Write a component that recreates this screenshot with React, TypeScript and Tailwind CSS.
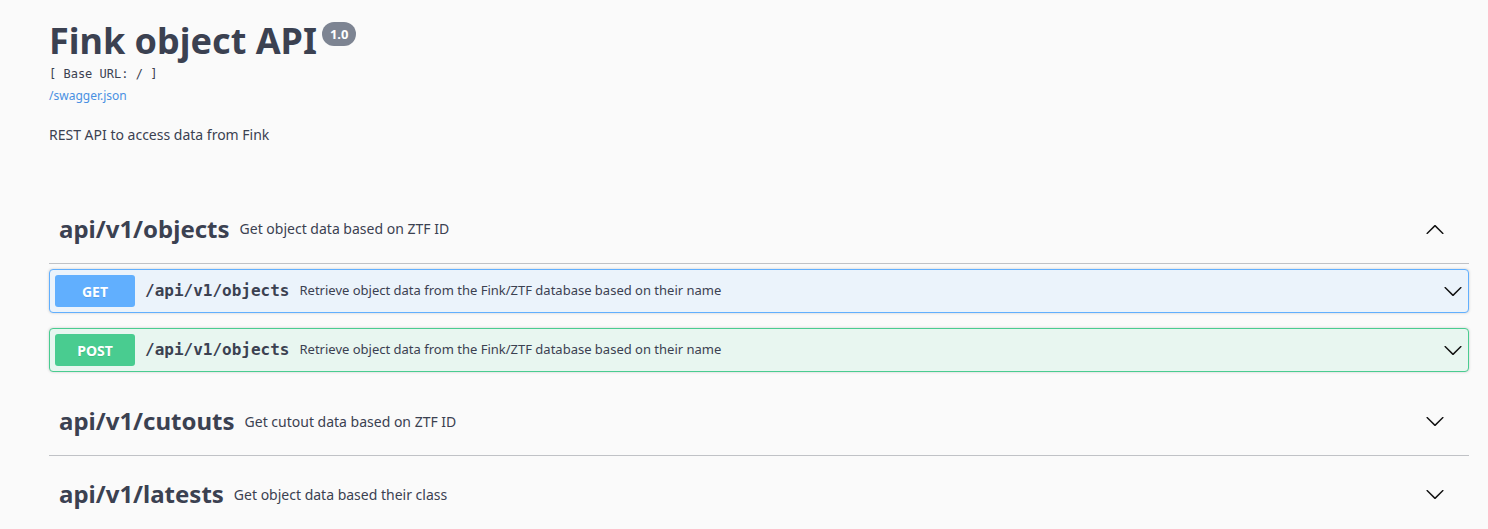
import React from 'react';

const sans = { fontFamily: '"Noto Sans", "Open Sans", sans-serif' };

const ArrowDown: React.FC<{ className?: string }> = ({ className }) => (
    <svg viewBox="0 0 20 20" width="20" height="20" className={className}>
        <path d="M17.418 6.109c.272-.268.709-.268.979 0s.271.701 0 .969l-7.908 7.83c-.27.268-.707.268-.979 0l-7.908-7.83c-.27-.268-.27-.701 0-.969.271-.268.709-.268.979 0L10 13.25l7.418-7.141z" />
    </svg>
);

const ArrowUp: React.FC<{ className?: string }> = ({ className }) => (
    <svg viewBox="0 0 20 20" width="20" height="20" className={className}>
        <path d="M17.418 14.908c.272.268.709.268.979 0s.271-.701 0-.969l-7.908-7.83c-.27-.268-.707-.268-.979 0l-7.908 7.83c-.27.268-.27.701 0 .969.271.268.709.268.979 0L10 7.767l7.418 7.141z" />
    </svg>
);

const rowSize = {
    normal: 'h-[70px] mb-[5px]',
    compact: 'h-[69px] mb-[3px]',
    tall: 'h-[71px] mb-[5px]',
};

const TagHeader: React.FC<{ name: string; desc: string; open?: boolean; size?: keyof typeof rowSize }> = ({ name, desc, open, size = 'normal' }) => (
    <div className={`flex items-center pl-[10px] pr-[24px] border-b border-[rgba(59,65,81,0.3)] ${rowSize[size]}`}>
        <span className="text-[24px] font-bold text-[#3b4151]">{name}</span>
        <span className="flex-1 px-[10px] text-[14px] text-[#3b4151]">{desc}</span>
        {open ? <ArrowUp className="fill-[#111]" /> : <ArrowDown className="fill-[#111]" />}
    </div>
);

const Operation: React.FC<{ method: string; path: string; summary: string; tone: 'get' | 'post' }> = ({ method, path, summary, tone }) => {
    const styles = {
        get: { box: 'border-[#61affe] bg-[#ebf3fb]', badge: 'bg-[#61affe]' },
        post: { box: 'border-[#49cc90] bg-[#e8f6f0]', badge: 'bg-[#49cc90]' },
    };
    return (
        <div className={`flex items-center p-[5px] mb-[15px] border rounded-[4px] shadow-[0_0_3px_rgba(0,0,0,0.19)] ${styles[tone].box}`}>
            <span className={`w-[80px] h-[32px] flex items-center justify-center rounded-[3px] text-white text-[14px] font-bold [text-shadow:0_1px_0_rgba(0,0,0,0.1)] ${styles[tone].badge}`}>
                {method}
            </span>
            <span className="px-[10px] text-[16px] font-bold text-[#3b4151]" style={{ fontFamily: '"DejaVu Sans Mono", monospace' }}>
                {path}
            </span>
            <span className="flex-1 text-[13px] text-[#3b4151]">{summary}</span>
            <ArrowDown className="fill-[#111]" />
        </div>
    );
};

const App: React.FC = () => {
    return (
        <div className="min-h-screen bg-[#fafafa] text-[#3b4151]" style={sans}>
            <div className="pl-[49px] pr-[19px]">
                <div className="pt-[16px] pb-[50px]">
                    <h1 className="text-[36px] font-bold leading-[49px] text-[#3b4151] flex items-start">
                        Fink object API
                        <span className="ml-[5px] mt-[6px] px-[8px] h-[24px] flex items-center rounded-full bg-[#7d8492] text-white text-[13px] font-bold leading-none">
                            1.0
                        </span>
                    </h1>
                    <div className="text-[12px] leading-[17px] mt-[1px]" style={{ fontFamily: '"DejaVu Sans Mono", monospace' }}>
                        [ Base URL: / ]
                    </div>
                    <div className="text-[12px] leading-[17px] mt-[4px] text-[#4990e2]">/swagger.json</div>
                    <div className="text-[14px] leading-[19px] mt-[21px]">REST API to access data from Fink</div>
                </div>

                <TagHeader name="api/v1/objects" desc="Get object data based on ZTF ID" open />
                <Operation
                    tone="get"
                    method="GET"
                    path="/api/v1/objects"
                    summary="Retrieve object data from the Fink/ZTF database based on their name"
                />
                <Operation
                    tone="post"
                    method="POST"
                    path="/api/v1/objects"
                    summary="Retrieve object data from the Fink/ZTF database based on their name"
                />

                <TagHeader name="api/v1/cutouts" desc="Get cutout data based on ZTF ID" size="compact" />
                <TagHeader name="api/v1/latests" desc="Get object data based their class" size="tall" />
            </div>
        </div>
    );
};

export default App;
